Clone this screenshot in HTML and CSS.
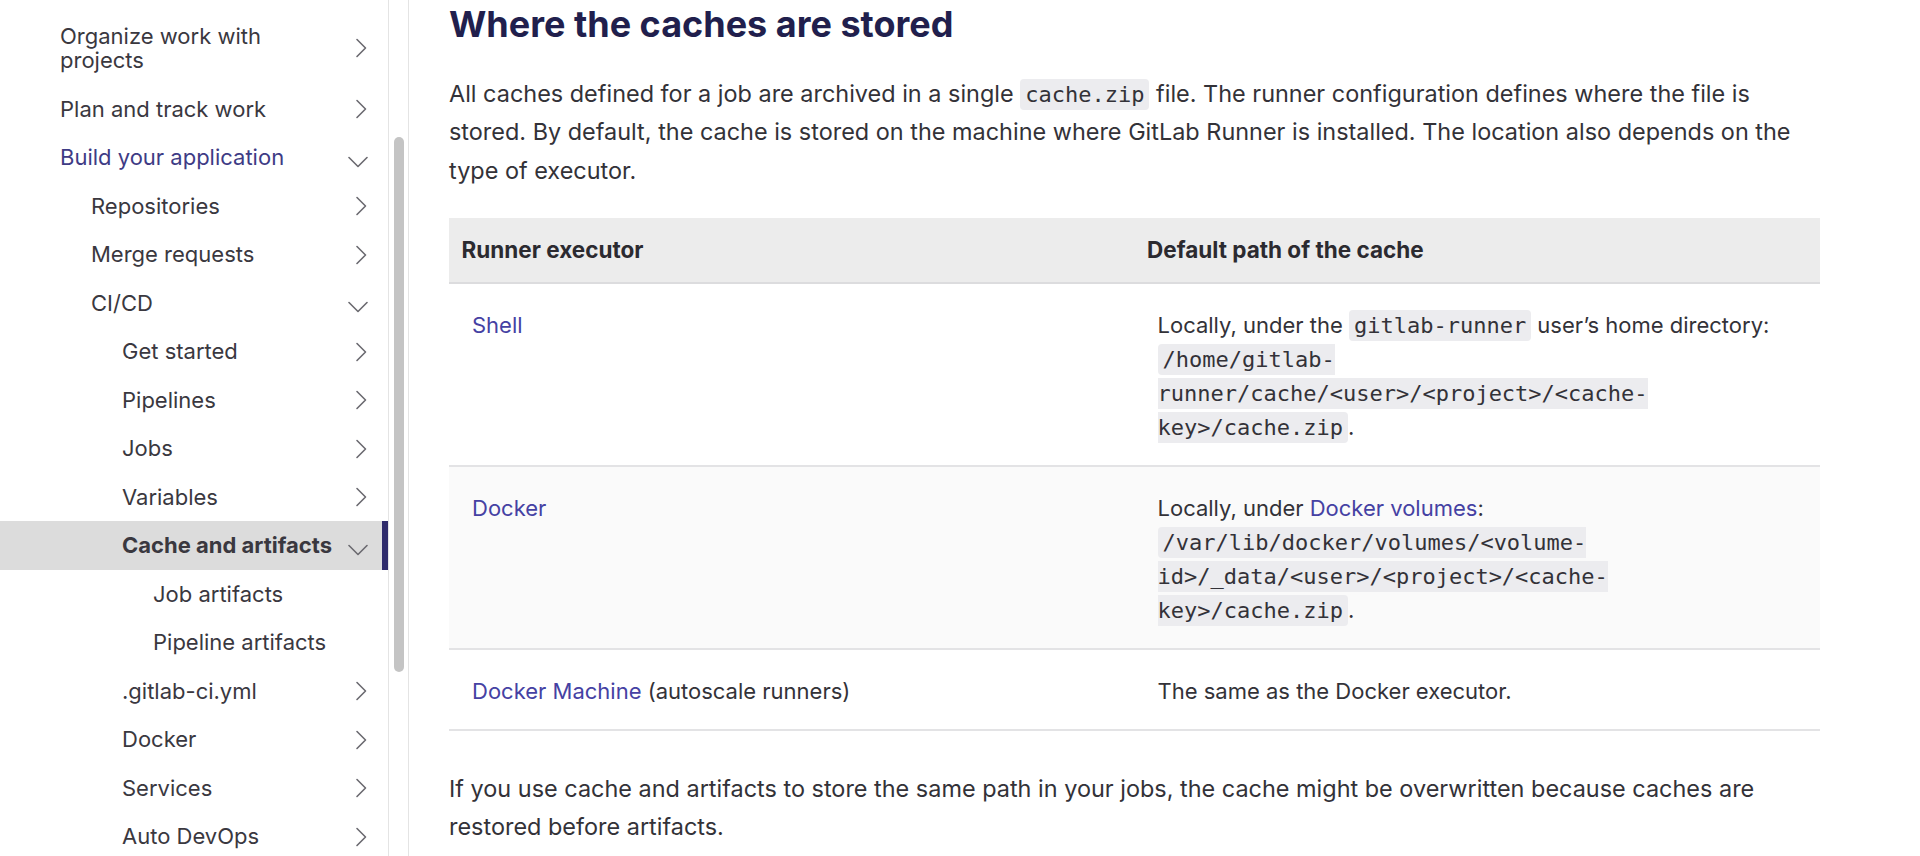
FILE: index.html
```html
<!DOCTYPE html>
<html lang="en">
<head>
<meta charset="utf-8">
<title>Where the caches are stored</title>
<link rel="stylesheet" href="styles.css">
</head>
<body>
<div class="page">
  <nav class="sidebar">
    <ul class="nav">
      <li class="item l1"><span class="label">Organize work with projects</span><svg class="chev" viewBox="0 0 24 20"><path d="M9 1.5L17.5 10L9 18.5"/></svg></li>
      <li class="item l1"><span class="label">Plan and track work</span><svg class="chev" viewBox="0 0 24 20"><path d="M9 1.5L17.5 10L9 18.5"/></svg></li>
      <li class="item l1 open"><span class="label">Build your application</span><svg class="chev" viewBox="0 0 24 20"><path d="M1 9.5L10 18.5L19 9.5"/></svg></li>
      <li class="item l2"><span class="label">Repositories</span><svg class="chev" viewBox="0 0 24 20"><path d="M9 1.5L17.5 10L9 18.5"/></svg></li>
      <li class="item l2"><span class="label">Merge requests</span><svg class="chev" viewBox="0 0 24 20"><path d="M9 1.5L17.5 10L9 18.5"/></svg></li>
      <li class="item l2"><span class="label">CI/CD</span><svg class="chev" viewBox="0 0 24 20"><path d="M1 9.5L10 18.5L19 9.5"/></svg></li>
      <li class="item l3"><span class="label">Get started</span><svg class="chev" viewBox="0 0 24 20"><path d="M9 1.5L17.5 10L9 18.5"/></svg></li>
      <li class="item l3"><span class="label">Pipelines</span><svg class="chev" viewBox="0 0 24 20"><path d="M9 1.5L17.5 10L9 18.5"/></svg></li>
      <li class="item l3"><span class="label">Jobs</span><svg class="chev" viewBox="0 0 24 20"><path d="M9 1.5L17.5 10L9 18.5"/></svg></li>
      <li class="item l3"><span class="label">Variables</span><svg class="chev" viewBox="0 0 24 20"><path d="M9 1.5L17.5 10L9 18.5"/></svg></li>
      <li class="item l3 active"><span class="label">Cache and artifacts</span><svg class="chev" viewBox="0 0 24 20"><path d="M1 9.5L10 18.5L19 9.5"/></svg></li>
      <li class="item l4"><span class="label">Job artifacts</span></li>
      <li class="item l4"><span class="label">Pipeline artifacts</span></li>
      <li class="item l3"><span class="label">.gitlab-ci.yml</span><svg class="chev" viewBox="0 0 24 20"><path d="M9 1.5L17.5 10L9 18.5"/></svg></li>
      <li class="item l3"><span class="label">Docker</span><svg class="chev" viewBox="0 0 24 20"><path d="M9 1.5L17.5 10L9 18.5"/></svg></li>
      <li class="item l3"><span class="label">Services</span><svg class="chev" viewBox="0 0 24 20"><path d="M9 1.5L17.5 10L9 18.5"/></svg></li>
      <li class="item l3"><span class="label">Auto DevOps</span><svg class="chev" viewBox="0 0 24 20"><path d="M9 1.5L17.5 10L9 18.5"/></svg></li>
    </ul>
  </nav>
  <div class="scroll-track"><div class="scroll-thumb"></div></div>
  <main class="content">
    <h2 class="title">Where the caches are stored</h2>
    <p class="text intro">All caches defined for a job are archived in a single <code>cache.zip</code> file. The runner configuration defines where the file is stored. By default, the cache is stored on the machine where GitLab Runner is installed. The location also depends on the type of executor.</p>
    <table class="cache-table">
      <thead>
        <tr><th>Runner executor</th><th>Default path of the cache</th></tr>
      </thead>
      <tbody>
        <tr>
          <td><a href="#">Shell</a></td>
          <td>Locally, under the <code>gitlab-runner</code> user’s home directory: <code>/home/gitlab-runner/cache/&lt;user&gt;/&lt;project&gt;/&lt;cache-key&gt;/cache.zip</code>.</td>
        </tr>
        <tr class="alt">
          <td><a href="#">Docker</a></td>
          <td>Locally, under <a href="#">Docker volumes</a>: <code>/var/lib/docker/volumes/&lt;volume-id&gt;/_data/&lt;user&gt;/&lt;project&gt;/&lt;cache-key&gt;/cache.zip</code>.</td>
        </tr>
        <tr>
          <td><a href="#">Docker Machine</a> (autoscale runners)</td>
          <td>The same as the Docker executor.</td>
        </tr>
      </tbody>
    </table>
    <p class="text after">If you use cache and artifacts to store the same path in your jobs, the cache might be overwritten because caches are restored before artifacts.</p>
  </main>
</div>
</body>
</html>
```

FILE: styles.css
```css
* {
  box-sizing: border-box;
}

html,
body {
  margin: 0;
  padding: 0;
  height: 856px;
  overflow: hidden;
  background: #ffffff;
}

body {
  font-family: Inter, "Noto Sans", sans-serif;
  color: #333238;
}

.page {
  display: flex;
  height: 856px;
}

/* Sidebar */
.sidebar {
  width: 388px;
  flex: none;
  overflow: hidden;
}

.nav {
  list-style: none;
  margin: 0;
  padding: 11.75px 0 0;
}

.item {
  display: flex;
  align-items: center;
  padding: 12px 16px 12px 0;
  font-size: 22px;
  line-height: 24.5px;
  color: #3a383f;
}

.l1 { padding-left: 60px; }
.l2 { padding-left: 91px; }
.l3 { padding-left: 122px; }
.l4 { padding-left: 153px; }

.label {
  flex: 1;
  min-width: 0;
}

.chev {
  flex: none;
  width: 24px;
  height: 20px;
  margin-left: 8px;
  fill: none;
  stroke: #6b6a70;
  stroke-width: 1.6;
  stroke-linecap: round;
  stroke-linejoin: round;
}

.item.open .label {
  color: #3e3b85;
}

.item.active {
  background: #dcdcdc;
  box-shadow: inset -6px 0 0 #2f2b6b;
  font-weight: 700;
}

/* Fake scrollbar strip */
.scroll-track {
  width: 21px;
  flex: none;
  border-left: 1px solid #e4e4e4;
  border-right: 1px solid #e4e4e4;
  padding-top: 137px;
}

.scroll-thumb {
  width: 10px;
  height: 535px;
  margin-left: 5px;
  border-radius: 5px;
  background: #c4c4c4;
}

/* Content */
.content {
  flex: 1;
  min-width: 0;
  padding: 3px 100px 0 40px;
}

.title {
  margin: 0;
  font-size: 36px;
  line-height: 1.2;
  font-weight: 700;
  color: #211f4d;
}

.text {
  margin: 0;
  font-size: 23.45px;
  line-height: 38.5px;
}

.intro {
  margin-top: 28.4px;
}

.after {
  margin-top: 38.7px;
}

code {
  font-family: "DejaVu Sans Mono", "Liberation Mono", monospace;
  font-size: 22px;
  line-height: 1;
  background: #ececef;
  border-radius: 4px;
  padding: 3px 5px;
}

a {
  color: #4541a3;
  text-decoration: none;
}

.cache-table {
  margin-top: 28px;
  width: 100%;
  border-collapse: collapse;
  table-layout: fixed;
  font-size: 22px;
  line-height: 34px;
}

.cache-table th {
  text-align: left;
  font-size: 22.5px;
  font-weight: 700;
  background: #ececec;
  padding: 15px 12.5px;
  border-bottom: 2px solid #dcdcde;
  color: #2b2a30;
}

.cache-table td {
  vertical-align: top;
  padding: 24px 30px 21px 23px;
  border-bottom: 2px solid #e3e3e5;
}

.cache-table tr.alt td {
  background: #fafafa;
}
```
